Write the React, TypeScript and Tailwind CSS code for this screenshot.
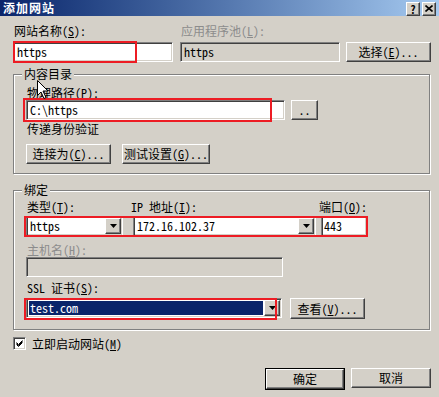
import type { ReactNode } from 'react'

const raised =
  'bg-[#d4d0c8] border border-t-white border-l-white border-b-[#404040] border-r-[#404040] shadow-[inset_-1px_-1px_0_#808080,inset_1px_1px_0_#d4d0c8]'
const sunken =
  'border border-t-[#808080] border-l-[#808080] border-b-white border-r-white shadow-[inset_1px_1px_0_#404040,inset_-1px_-1px_0_#d4d0c8]'
const redBox = 'absolute border-2 border-[#ed1c24] pointer-events-none'

function K({ k }: { k: string }) {
  return (
    <>
      (<u>{k}</u>)
    </>
  )
}

function Btn({ children, className = '' }: { children: ReactNode; className?: string }) {
  return (
    <div className={`${raised} flex items-center justify-center h-[20px] whitespace-nowrap ${className}`}>
      {children}
    </div>
  )
}

function Arrow() {
  return (
    <svg width="7" height="4" viewBox="0 0 7 4">
      <path d="M0 0h7L3.5 4z" fill="#000" />
    </svg>
  )
}

function Combo({
  value,
  className = '',
  selected = false,
}: {
  value: string
  className?: string
  selected?: boolean
}) {
  return (
    <div className={`${sunken} bg-white flex h-[20px] p-[1px] ${className}`}>
      <div className="flex-1 flex items-center pl-[1px] pr-[1px] min-w-0">
        <span
          className={
            selected
              ? 'bg-[#0a246a] text-white w-full h-[14px] flex items-center pl-[1px]'
              : 'pl-[1px]'
          }
        >
          {value}
        </span>
      </div>
      <div className={`${raised} w-[16px] flex items-center justify-center`}>
        <Arrow />
      </div>
    </div>
  )
}

function Group({
  title,
  className = '',
  children,
}: {
  title: string
  className?: string
  children: ReactNode
}) {
  return (
    <div
      className={`relative border border-[#808080] shadow-[inset_1px_1px_0_#fff,1px_1px_0_#fff] ${className}`}
    >
      <span className="absolute -top-[7px] left-[8px] px-[2px] bg-[#d4d0c8] leading-[12px]">
        {title}
      </span>
      {children}
    </div>
  )
}

export default function App() {
  return (
    <div className="relative w-[439px] h-[397px] overflow-hidden bg-[#d4d0c8] text-[12px] leading-[12px] text-black whitespace-nowrap font-['Noto_Sans_Mono_CJK_SC','Noto_Sans_CJK_SC',monospace] [font-feature-settings:'hwid']">
      {/* Title bar */}
      <div className="flex items-center h-[16px] bg-linear-to-r from-[#0a246a] to-[#a6caf0] pl-[3px] pr-[3px]">
        <span className="text-white font-bold tracking-[1px]">添加网站</span>
        <div className="ml-auto flex gap-[2px] mt-[1px]">
          <div className={`${raised} w-[14px] h-[14px] flex items-center justify-center font-bold text-[11px]`}>
            ?
          </div>
          <div className={`${raised} w-[14px] h-[14px] flex items-center justify-center`}>
            <svg width="8" height="7" viewBox="0 0 8 7">
              <path d="M0.5 0.5l7 6M7.5 0.5l-7 6" stroke="#000" strokeWidth="1.6" />
            </svg>
          </div>
        </div>
      </div>

      <div className="flex flex-col pl-[13px] pr-[8px]">
        {/* Site name row */}
        <div className="flex mt-[9px]">
          <div className="w-[160px] flex flex-col">
            <span className="ml-[1px]">
              网站名称<K k="S" />:
            </span>
            <div className={`${sunken} bg-white h-[20px] mt-[5px] flex items-center pl-[3px]`}>
              https
            </div>
          </div>
          <div className="w-[160px] ml-[7px] flex flex-col">
            <span className="ml-[1px] text-[#8c8c8c]">
              应用程序池<K k="L" />:
            </span>
            <div className={`${sunken} h-[20px] mt-[5px] flex items-center pl-[3px]`}>https</div>
          </div>
          <Btn className="w-[85px] ml-[6px] mt-[17px]">
            选择<K k="E" />...
          </Btn>
        </div>

        {/* Content directory */}
        <Group title="内容目录" className="mt-[12px] w-[417px] h-[100px] pl-[12px] pt-[12px]">
          <span className="ml-[1px] block">
            物理路径<K k="P" />:
          </span>
          <div className="flex mt-[1px]">
            <div className={`${sunken} bg-white w-[259px] h-[20px] flex items-center pl-[3px]`}>
              C:\https
            </div>
            <Btn className="w-[27px] ml-[6px]">..</Btn>
          </div>
          <span className="ml-[1px] mt-[3px] block">传递身份验证</span>
          <div className="flex mt-[9px] gap-[11px]">
            <Btn className="w-[85px]">
              连接为<K k="C" />...
            </Btn>
            <Btn className="w-[88px]">
              测试设置<K k="G" />...
            </Btn>
          </div>
        </Group>

        {/* Binding */}
        <Group title="绑定" className="mt-[16px] w-[417px] h-[140px] pl-[12px] pt-[10px]">
          <div className="flex">
            <div className="w-[97px] flex flex-col">
              <span className="ml-[1px]">
                类型<K k="T" />:
              </span>
              <Combo value="https" className="mt-[3px]" />
            </div>
            <div className="w-[185px] ml-[8px] flex flex-col">
              <span>
                IP 地址<K k="I" />:
              </span>
              <Combo value="172.16.102.37" className="mt-[3px] ml-[2px]" />
            </div>
            <div className="w-[48px] ml-[3px] flex flex-col">
              <span>
                端口<K k="O" />:
              </span>
              <div className={`${sunken} bg-white h-[20px] mt-[3px] ml-[2px] flex items-center pl-[2px]`}>
                443
              </div>
            </div>
          </div>
          <span className="ml-[1px] mt-[8px] block text-[#8c8c8c]">
            主机名<K k="H" />:
          </span>
          <div className={`${sunken} w-[257px] h-[20px] mt-[1px]`} />
          <span className="ml-[1px] mt-[5px] block">
            SSL 证书<K k="S" />:
          </span>
          <div className="flex mt-[4px] items-start">
            <Combo value="test.com" selected className="w-[256px]" />
            <Btn className="w-[75px] ml-[8px] h-[21px]">
              查看<K k="V" />...
            </Btn>
          </div>
        </Group>

        {/* Start checkbox */}
        <div className="flex items-center mt-[7px]">
          <div className={`${sunken} bg-white w-[13px] h-[13px] flex items-center justify-center`}>
            <svg width="7" height="7" viewBox="0 0 7 7">
              <path d="M0.5 2.5l2 2 4-4M0.5 3.5l2 2 4-4M0.5 4.5l2 2 4-4" stroke="#000" strokeWidth="1" fill="none" />
            </svg>
          </div>
          <span className="ml-[6px]">
            立即启动网站<K k="M" />
          </span>
        </div>

        {/* Dialog buttons */}
        <div className="flex justify-end gap-[6px] mt-[18px]">
          <div className="border border-black">
            <Btn className="w-[78px] h-[18px]">确定</Btn>
          </div>
          <Btn className="w-[80px]">取消</Btn>
        </div>
      </div>

      {/* Red annotation boxes */}
      <div className={`${redBox} left-[13px] top-[41px] w-[124px] h-[22px]`} />
      <div className={`${redBox} left-[23px] top-[98px] w-[249px] h-[24px]`} />
      <div className={`${redBox} left-[24px] top-[216px] w-[344px] h-[21px]`} />
      <div className={`${redBox} left-[24px] top-[298px] w-[253px] h-[22px]`} />

      {/* Mouse cursor */}
      <svg className="absolute left-[37px] top-[80px]" width="12" height="19" viewBox="0 0 12 19">
        <path d="M0.5 0.5v15l3.5-3.5 3 6.5 2-1-3-6.5h5z" fill="#fff" stroke="#000" strokeWidth="1" />
      </svg>
    </div>
  )
}
